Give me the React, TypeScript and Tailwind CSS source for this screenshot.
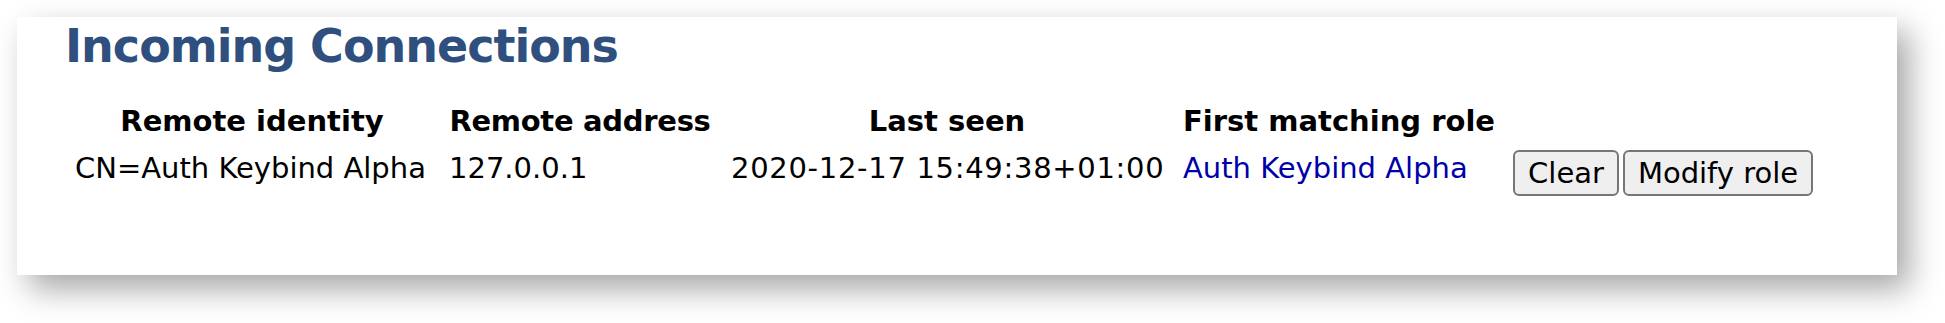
import React from 'react';

const cols = 'grid grid-cols-[354px_262px_432px_310px_auto] gap-x-[20px]';

const App: React.FC = () => {
  return (
    <div className="bg-white w-[1945px] h-[323px] p-[17px] pr-[48px] font-['DejaVu_Sans',Verdana,sans-serif] text-black">
      <div className="bg-white h-[258px] shadow-[12px_14px_30px_rgba(0,0,0,0.35)] pl-[48px] pt-[6px]">
        <h2 className="text-[46px] leading-[46px] font-bold text-[#2f4f7e] tracking-[-1px]">
          Incoming Connections
        </h2>
        <div className="pl-[10px] text-[29px] leading-[34px] mt-[35px]">
          <div className={`${cols} font-bold whitespace-nowrap`}>
            <div className="text-center">Remote identity</div>
            <div className="text-center tracking-[-0.3px]">Remote address</div>
            <div className="text-center">Last seen</div>
            <div className="text-center">First matching role</div>
            <div></div>
          </div>
          <div className={`${cols} mt-[12px] items-start`}>
            <div className="mt-[1px] whitespace-nowrap">CN=Auth Keybind Alpha</div>
            <div className="mt-[1px]">127.0.0.1</div>
            <div className="mt-[1px] text-center whitespace-nowrap tracking-[0.7px]">2020-12-17 15:49:38+01:00</div>
            <div className="mt-[1px] whitespace-nowrap">
              <a href="#" className="text-[#0000a8]">Auth Keybind Alpha</a>
            </div>
            <div className="flex gap-[4px]">
              <button className="h-[46px] w-[106px] border-2 border-[#767676] rounded-[6px] bg-[#efefef] text-[29px] leading-none">
                Clear
              </button>
              <button className="h-[46px] w-[190px] border-2 border-[#767676] rounded-[6px] bg-[#efefef] text-[29px] leading-none">
                Modify role
              </button>
            </div>
          </div>
        </div>
      </div>
    </div>
  );
};

export default App;
